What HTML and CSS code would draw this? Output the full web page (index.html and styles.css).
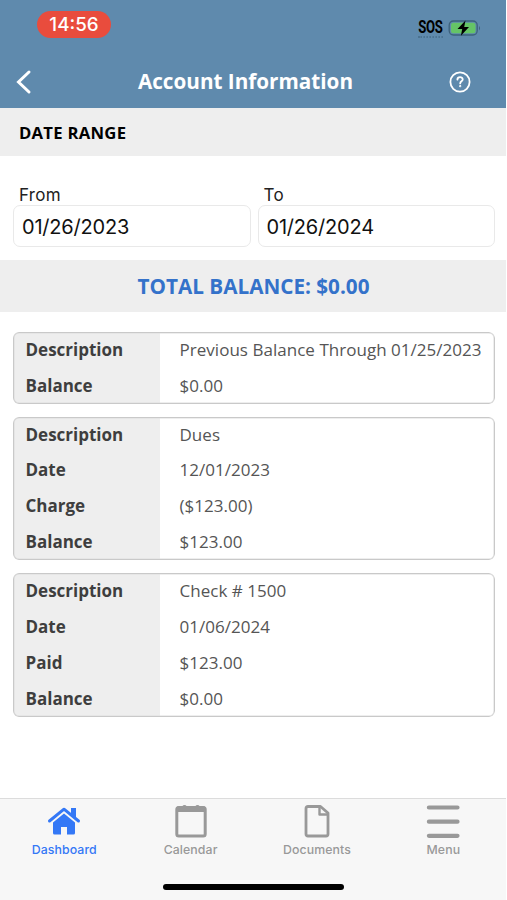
FILE: index.html
```html
<!DOCTYPE html>
<html lang="en">
<head>
<meta charset="utf-8">
<title>Account Information</title>
<link rel="stylesheet" href="styles.css">
</head>
<body>
<div class="app">
  <header class="header">
    <div class="status">
      <span class="clock">14:56</span>
      <div class="signal">
        <span class="sos">SOS</span>
        <svg class="battery" width="34" height="18" viewBox="0 0 34 18">
          <rect x="1.2" y="2" width="28" height="14" rx="4.2" fill="none" stroke="#3d617c" stroke-width="1.3"/>
          <rect x="3" y="3.8" width="24.5" height="10.4" rx="2.5" fill="#65c466"/>
          <path d="M31 7v4.4q2-2.2 0-4.4z" fill="#3d617c"/>
          <path d="M17.5 1.5 9.5 10h4.7l-1.3 6.8L21 8h-4.8z" fill="#000"/>
        </svg>
      </div>
    </div>
    <div class="nav">
      <svg class="back" width="18" height="26" viewBox="0 0 18 26"><path d="M14 3 3.5 13 14 23" fill="none" stroke="#fff" stroke-width="3" stroke-linecap="round" stroke-linejoin="miter"/></svg>
      <h1 class="title">Account Information</h1>
      <svg class="help" width="22" height="22" viewBox="0 0 22 22" fill="none" stroke="#fff" stroke-linecap="round"><circle cx="11" cy="11" r="9.6" stroke-width="1.8"/><path d="M8.4 8.6C8.5 5.4 13.7 5.4 13.7 8.5 13.7 10.4 11.2 10.3 11.2 12.4" stroke-width="1.8"/><circle cx="11.2" cy="15.2" r=".4" stroke-width="1.4"/></svg>
    </div>
  </header>
  <h2 class="section">DATE RANGE</h2>
  <div class="range">
    <label class="field"><span class="caption">From</span><span class="date">01/26/2023</span></label>
    <label class="field"><span class="caption">To</span><span class="date">01/26/2024</span></label>
  </div>
  <div class="total">TOTAL BALANCE: $0.00</div>
  <main class="cards">
    <dl class="card">
      <dt>Description</dt><dd>Previous Balance Through 01/25/2023</dd>
      <dt>Balance</dt><dd>$0.00</dd>
    </dl>
    <dl class="card">
      <dt>Description</dt><dd>Dues</dd>
      <dt>Date</dt><dd>12/01/2023</dd>
      <dt>Charge</dt><dd>($123.00)</dd>
      <dt>Balance</dt><dd>$123.00</dd>
    </dl>
    <dl class="card">
      <dt>Description</dt><dd>Check # 1500</dd>
      <dt>Date</dt><dd>01/06/2024</dd>
      <dt>Paid</dt><dd>$123.00</dd>
      <dt>Balance</dt><dd>$0.00</dd>
    </dl>
  </main>
  <footer class="footer">
    <nav class="tabs">
      <a class="tab active">
        <svg width="36" height="36" viewBox="0 0 36 36"><path d="M3.5 17 18 5.2 32.5 17" fill="none" stroke="currentColor" stroke-width="3" stroke-linecap="round" stroke-linejoin="round"/><path d="M25 4h5v11l-5-4z" fill="currentColor"/><path d="M18 9.6 29 18.5V29q0 1.5-1.5 1.5H21v-7.500h-6v7.500H8.500Q7 30.500 7 29V18.500z" fill="currentColor"/></svg>
        <span>Dashboard</span>
      </a>
      <a class="tab">
        <svg width="36" height="36" viewBox="0 0 36 36"><rect x="3.800" y="3.500" width="28.400" height="28.500" rx="2" fill="none" stroke="currentColor" stroke-width="3"/><path d="M4 2.400h5q2.500-2.600 5 0h8q2.500-2.600 5 0h5v5.600H4z" fill="currentColor"/></svg>
        <span>Calendar</span>
      </a>
      <a class="tab">
        <svg width="36" height="36" viewBox="0 0 36 36" fill="none" stroke="currentColor" stroke-width="2.800" stroke-linejoin="round"><path d="M9 2.500h12.500L29 9v21q0 2-2 2H9q-2 0-2-2V4.500q0-2 2-2z"/><path d="M20.500 3v7.500H29" stroke-width="2.400"/></svg>
        <span>Documents</span>
      </a>
      <a class="tab">
        <svg width="36" height="36" viewBox="0 0 36 36" stroke="currentColor" stroke-width="4.200" stroke-linecap="round"><path d="M3.900 3.500h28.600M3.900 17.700h28.600M3.900 31.800h28.600"/></svg>
        <span>Menu</span>
      </a>
    </nav>
    <div class="home"></div>
  </footer>
</div>
</body>
</html>
```
FILE: styles.css
```css
* { box-sizing: border-box; }
body { margin: 0; background: #fff; font-family: "Open Sans", sans-serif; }
h1, h2, dl, dd { margin: 0; }
svg { display: block; }
.app { width: 506px; height: 900px; display: flex; flex-direction: column; }
.header { height: 108px; background: #5f8aad; }
.status { height: 54px; display: flex; justify-content: space-between; padding: 11px 24px 0 37px; }
.clock { width: 74px; height: 27px; border-radius: 14px; background: #e94c3d; color: #fff; font: 500 18.800px/27px Inter, sans-serif; text-align: center; }
.signal { display: flex; gap: 5px; padding-top: 8px; }
.sos { height: 19px; color: #000; font: 700 17.500px/17px Roboto, sans-serif; letter-spacing: -.3px; border-bottom: 2px dotted #4b7391; transform: scaleX(.75); transform-origin: right; }
.nav { height: 54px; display: flex; align-items: center; padding: 1px 35px 0 15px; }
.title { flex: 1; text-align: center; font-size: 20.700px; font-weight: 700; line-height: 53px; color: #fff; padding-left: 9px; }
.section { height: 48px; padding-left: 19px; background: #eee; font-size: 16.700px; letter-spacing: .25px; line-height: 49px; font-weight: 700; color: #000; }
.range { height: 104px; padding: 27px 11px 0 13px; display: flex; gap: 7px; }
.field { flex: 1; display: flex; flex-direction: column; }
.caption { height: 22px; padding-left: 6px; font: 400 17px/24px Inter, sans-serif; color: #222; letter-spacing: .3px; }
.date { height: 42px; padding-left: 8px; border: 1px solid #e9e9e9; border-radius: 7px; font: 400 20px/42px Inter, sans-serif; letter-spacing: -.2px; color: #111; }
.total { height: 52px; background: #eee; text-align: center; color: #3472ca; font-size: 20.700px; line-height: 53px; font-weight: 700; padding-left: 1px; }
.cards { flex: 1; padding: 20px 11px 0 13px; display: flex; flex-direction: column; gap: 12.800px; }
.card { display: grid; grid-template-columns: 147px 1fr; grid-auto-rows: 35.900px; border-radius: 6px; overflow: hidden; position: relative; }
.card::after { content: ""; position: absolute; inset: 0; border: 1.500px solid #c9c9c9; box-shadow: inset 0 0 0 .5px #ddd; border-radius: 6px; }
dt, dd { line-height: 36px; font-size: 17px; white-space: nowrap; }
dt { background: #eee; padding-left: 12.500px; font-weight: 700; color: #3e3e3e; }
dd { padding-left: 19.500px; color: #555; letter-spacing: .03px; }
.footer { height: 102px; border-top: 1px solid #dcdcdc; background: #f7f7f7; }
.tabs { display: grid; grid-template-columns: repeat(4, 126.400px); padding: 5px 0 0 1px; }
.tab { display: flex; flex-direction: column; align-items: center; color: #999; font: 500 12.300px/20px Inter, sans-serif; letter-spacing: .1px; }
.tab.active { color: #3478f6; }
.home { width: 181px; height: 6px; border-radius: 3px; background: #000; margin: 24px auto 0; }
```
